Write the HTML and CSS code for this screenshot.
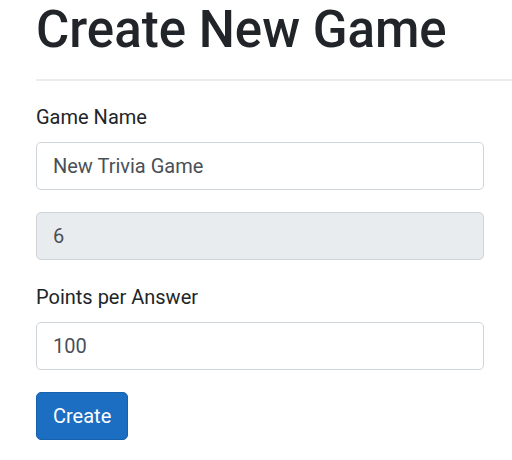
FILE: index.html
```html
<!DOCTYPE html>
<html>
<head>
<meta charset="utf-8">
<link rel="stylesheet" href="styles.css">
</head>
<body>
<main class="page">
  <h1 class="title">Create New Game</h1>
  <hr class="rule">
  <form class="form">
    <div class="group">
      <label class="label" for="name">Game Name</label>
      <input class="control" id="name" type="text" value="New Trivia Game">
    </div>
    <div class="group">
      <input class="control" type="text" value="6" disabled>
    </div>
    <div class="group">
      <label class="label" for="points">Points per Answer</label>
      <input class="control" id="points" type="text" value="100">
    </div>
    <button class="btn" type="button">Create</button>
  </form>
</main>
</body>
</html>
```
FILE: styles.css
```css
html, body {
  margin: 0;
  padding: 0;
  background: #fff;
}
body {
  font-family: Roboto, "Liberation Sans", sans-serif;
  color: #212529;
}
.page {
  padding-left: 36px;
}
.title {
  margin: 0;
  font-size: 51px;
  font-weight: 500;
  line-height: 60px;
  color: #212529;
}
.rule {
  margin: 19px 0 0 0;
  border: 0;
  border-top: 2px solid #ececec;
  height: 0;
}
.form {
  width: 448px;
  padding-top: 21px;
}
.group {
  margin-bottom: 22px;
}
.label {
  display: block;
  font-size: 20px;
  line-height: 30px;
  margin-bottom: 10px;
  color: #212529;
}
.control {
  display: block;
  box-sizing: border-box;
  width: 100%;
  height: 48px;
  padding: 0 16px;
  font-family: Roboto, "Liberation Sans", sans-serif;
  font-size: 20px;
  color: #495057;
  background: #fff;
  border: 1px solid #ced4da;
  border-radius: 5px;
  outline: none;
}
.control:disabled {
  background: #e9ecef;
  color: #495057;
  opacity: 1;
}
.btn {
  display: block;
  box-sizing: border-box;
  height: 48px;
  padding: 0 16px;
  font-family: Roboto, "Liberation Sans", sans-serif;
  font-size: 20px;
  color: #fff;
  background: #1b6ec2;
  border: 1px solid #1861ac;
  border-radius: 5px;
}
```
